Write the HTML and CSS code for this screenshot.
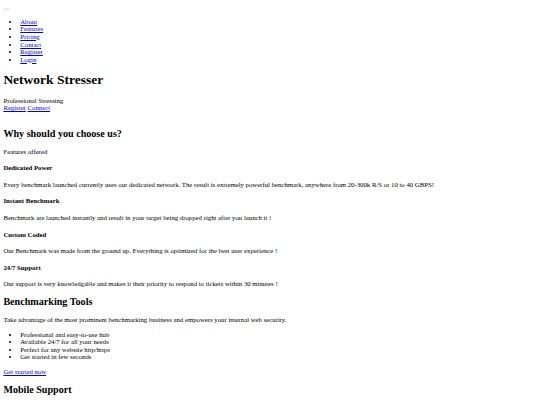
FILE: index.html
```html
<!DOCTYPE html>
<html>
<head>
<meta charset="utf-8">
<title>Network Stresser</title>
<link rel="stylesheet" href="styles.css">
</head>
<body>
<nav class="nav">
<button class="toggler" type="button"></button>
<ul class="menu">
<li><a href="#">About</a></li>
<li><a href="#">Features</a></li>
<li><a href="#">Pricing</a></li>
<li><a href="#">Contact</a></li>
<li><a href="#">Register</a></li>
<li><a href="#">Login</a></li>
</ul>
</nav>
<header class="hero">
<h1>Network Stresser</h1>
<div class="tagline">Professional Stressing<br><a href="#">Register</a> <a href="#">Connect</a></div>
</header>
<section class="features">
<h2>Why should you choose us?</h2>
<p>Features offered</p>
<h4>Dedicated Power</h4>
<p>Every benchmark launched currently uses our dedicated network. The result is extremely powerful benchmark, anywhere from 20-300k R/S or 10 to 40 GBPS!</p>
<h4>Instant Benchmark</h4>
<p>Benchmark are launched instantly and result in your target being dropped right after you launch it !</p>
<h4>Custom Coded</h4>
<p>Our Benchmark was made from the ground up. Everything is optimized for the best user experience !</p>
<h4>24/7 Support</h4>
<p>Our support is very knowledgable and makes it their priority to respond to tickets within 30 minutes !</p>
</section>
<section class="tools">
<h2>Benchmarking Tools</h2>
<p>Take advantage of the most prominent benchmarking business and empowers your internal web security.</p>
<ul>
<li>Professional and easy-to-use hub</li>
<li>Available 24/7 for all your needs</li>
<li>Perfect for any website http/https</li>
<li>Get started in few seconds</li>
</ul>
<p><a href="#">Get started now</a></p>
</section>
<section class="mobile">
<h2>Mobile Support</h2>
<p>Take advantage of the most prominent benchmarking business on any mobile device, anytime.</p>
</section>
</body>
</html>
```
FILE: styles.css
```css
html {
  zoom: 0.4219;
}
body {
  font-family: "Liberation Serif", "Times New Roman", serif;
  line-height: 1.125;
}
h2 {
  line-height: 1.15;
}
.hero {
  padding-bottom: 18px;
}
```
